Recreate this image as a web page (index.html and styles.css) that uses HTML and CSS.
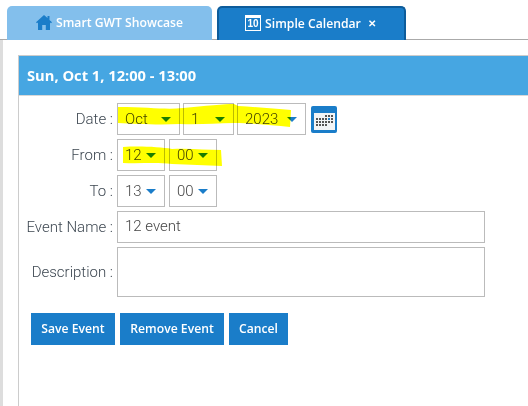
FILE: index.html
```html
<!DOCTYPE html>
<html lang="en">
<head>
<meta charset="utf-8">
<title>Simple Calendar</title>
<link rel="stylesheet" href="styles.css">
</head>
<body>
<div class="tabs">
  <div class="tab tab-light">
    <svg class="home" viewBox="0 0 16 15" width="16" height="15"><path fill="#1a7dc9" d="M8 0 L11.5 3.1 V1 H13.5 V4.9 L16 7.2 L15 8.3 L14 7.4 V15 H9.8 V10 H6.2 V15 H2 V7.4 L1 8.3 L0 7.2 Z"/></svg>
    <span>Smart GWT Showcase</span>
  </div>
  <div class="tab tab-active">
    <span class="cal-badge">10</span>
    <span>Simple Calendar</span>
    <span class="close">✕</span>
  </div>
</div>
<div class="page">
  <div class="panel">
    <div class="panel-head">Sun, Oct 1, 12:00 - 13:00</div>
    <div class="form">
      <div class="row">
        <label class="lbl">Date :</label>
        <div class="sel w-month">Oct<i class="caret"></i></div>
        <div class="sel w-day">1<i class="caret"></i></div>
        <div class="sel w-year">2023<i class="caret"></i></div>
        <svg class="picker" viewBox="0 0 26 27" width="26" height="27">
          <rect width="26" height="27" rx="2" fill="#1a7dc9"/>
          <rect x="3" y="7" width="21" height="17" fill="#f2f4f6"/>
          <g fill="#555">
            <rect x="14" y="9" width="2" height="2"/><rect x="17" y="9" width="2" height="2"/><rect x="20" y="9" width="2" height="2"/>
            <rect x="5" y="12" width="2" height="2"/><rect x="8" y="12" width="2" height="2"/><rect x="11" y="12" width="2" height="2"/><rect x="14" y="12" width="2" height="2"/><rect x="20" y="12" width="2" height="2"/>
            <rect x="5" y="15" width="2" height="2"/><rect x="8" y="15" width="2" height="2"/><rect x="11" y="15" width="2" height="2"/><rect x="14" y="15" width="2" height="2"/><rect x="17" y="15" width="2" height="2"/><rect x="20" y="15" width="2" height="2"/>
            <rect x="5" y="18" width="2" height="2"/><rect x="8" y="18" width="2" height="2"/><rect x="11" y="18" width="2" height="2"/><rect x="14" y="18" width="2" height="2"/>
          </g>
          <rect x="17" y="12" width="2" height="2" fill="#1a7dc9"/>
        </svg>
      </div>
      <div class="row">
        <label class="lbl">From :</label>
        <div class="sel w-time">12<i class="caret"></i></div>
        <div class="sel w-time">00<i class="caret"></i></div>
      </div>
      <div class="row">
        <label class="lbl">To :</label>
        <div class="sel w-time">13<i class="caret"></i></div>
        <div class="sel w-time">00<i class="caret"></i></div>
      </div>
      <div class="row">
        <label class="lbl">Event Name :</label>
        <div class="field">12 event</div>
      </div>
      <div class="row">
        <label class="lbl">Description :</label>
        <div class="field field-area"></div>
      </div>
      <div class="actions">
        <div class="btn btn-save">Save Event</div>
        <div class="btn btn-remove">Remove Event</div>
        <div class="btn btn-cancel">Cancel</div>
      </div>
    </div>
  </div>
</div>
<svg class="marker" viewBox="0 0 528 406" width="528" height="406">
  <path fill="#ffff00" d="M118 107 C150 107 165 110 183 108 C205 106 225 104 234 104 L238 106 C255 107 275 109 291 110 L290 127 C270 125 250 123 234 123 C215 123 200 125 180 124 C160 125 135 124 118 123 Z"/>
  <path fill="#ffff00" d="M123 147 C140 146 160 147 172 149 C190 148 205 150 221 150 L222 166 C205 165 190 165 172 164 C155 162 140 164 123 163 Z"/>
</svg>
</body>
</html>
```
FILE: styles.css
```css
* { box-sizing: border-box; }
html, body { margin: 0; height: 406px; overflow: hidden; background: #fff; }
body { position: relative; font-family: "Roboto", sans-serif; color: #555; }

.tabs {
  display: flex;
  gap: 5px;
  height: 40px;
  padding: 6px 0 0 7px;
  border-bottom: 1px solid #aaa;
}
.tab {
  display: flex;
  align-items: center;
  justify-content: center;
  height: 34px;
  border-radius: 5px 5px 0 0;
  font-family: "Open Sans", sans-serif;
  font-size: 12.2px;
  font-weight: 600;
  color: #fff;
  padding-bottom: 2px;
}
.tab-light { width: 205px; background: #83bfec; gap: 4px; }
.tab-active {
  width: 189px;
  padding-right: 2px;
  background: #1a7dc9;
  border: 2px solid #0d5c9b;
  border-bottom: 0;
  gap: 4px;
}
.home { flex: none; }
.cal-badge {
  width: 16px;
  height: 16px;
  border: 1px solid #fff;
  border-top-width: 3px;
  font-family: "Liberation Sans", sans-serif;
  font-size: 10px;
  font-weight: 700;
  line-height: 12px;
  text-align: center;
}
.close { font-size: 10px; font-weight: 700; margin-left: 3px; }

.page {
  height: 366px;
  padding: 15px 0 0 15px;
  border-left: 3px solid #ddd;
}
.panel {
  height: 351px;
  border-left: 1px solid #ccc;
  border-top: 1px solid #ccc;
}
.panel-head {
  height: 40px;
  padding-left: 8px;
  background: #46a6e2;
  border-bottom: 1px solid #d8d8d8;
  color: #fff;
  font-family: "Open Sans", sans-serif;
  font-size: 14.7px;
  font-weight: 700;
  line-height: 38px;
}

.form { display: flex; flex-direction: column; gap: 4px; padding-top: 7px; }
.row { display: flex; align-items: center; gap: 3px; }
.lbl {
  flex: none;
  width: 94px;
  margin-right: 1px;
  padding-bottom: 1px;
  text-align: right;
  font-size: 15px;
  font-weight: 300;
  color: #3c4650;
}

.sel {
  display: flex;
  align-items: center;
  justify-content: space-between;
  height: 32px;
  padding: 0 8px 0 7px;
  border: 1px solid #bbb;
  font-size: 15px;
  font-weight: 300;
  color: #444;
}
.row:nth-child(n+2) .sel { margin-right: 1px; }
.w-month { width: 63px; }
.w-day { width: 51px; }
.w-year { width: 69px; }
.w-time { width: 48px; }
.caret {
  width: 0;
  height: 0;
  border-left: 5px solid transparent;
  border-right: 5px solid transparent;
  border-top: 5px solid #1a7dc9;
  margin-left: 4px;
}
.picker { flex: none; margin-left: 2px; }

.field {
  width: 368px;
  height: 32px;
  padding: 0 7px;
  border: 1px solid #bbb;
  font-size: 15px;
  font-weight: 300;
  line-height: 29px;
  color: #444;
}
.field-area { height: 50px; }

.actions { display: flex; gap: 5px; padding: 12px 0 0 12px; }
.btn {
  height: 32px;
  background: #1a7dc9;
  color: #fff;
  font-family: "Open Sans", sans-serif;
  font-size: 12.2px;
  font-weight: 600;
  line-height: 31px;
  text-align: center;
}
.btn-save { width: 84px; }
.btn-remove { width: 104px; }
.btn-cancel { width: 59px; }

.marker {
  position: absolute;
  left: 0;
  top: 0;
  mix-blend-mode: multiply;
  pointer-events: none;
}
```
